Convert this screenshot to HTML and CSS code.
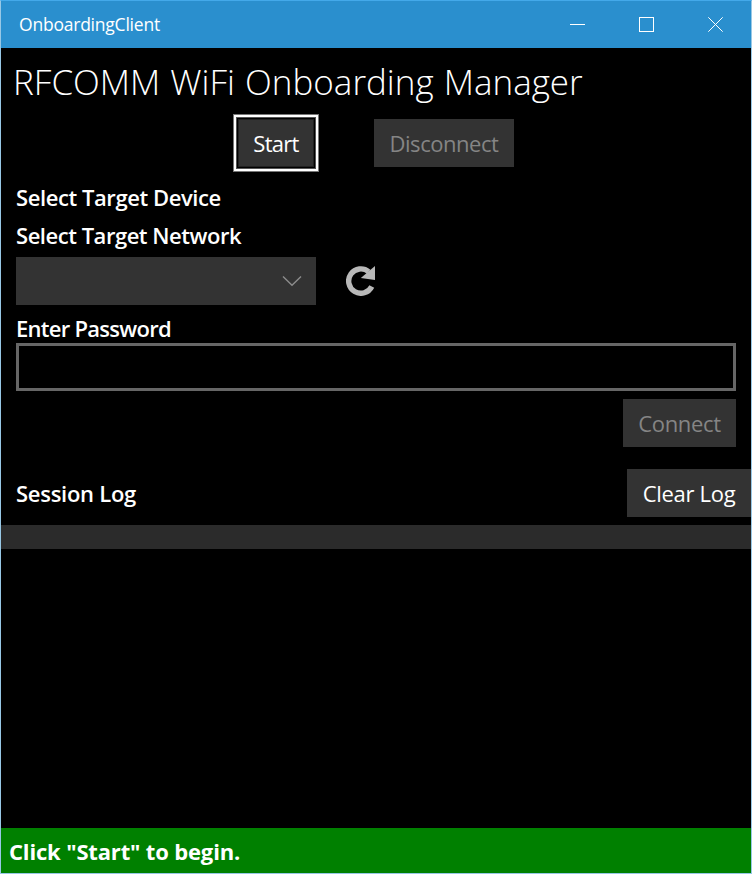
FILE: index.html
```html
<!DOCTYPE html>
<html lang="en">
<head>
<meta charset="utf-8">
<title>OnboardingClient</title>
<link rel="stylesheet" href="styles.css">
</head>
<body>
<div class="window">
  <header class="titlebar">
    <span class="app-name">OnboardingClient</span>
    <div class="caption-buttons">
      <svg viewBox="0 0 15 15"><path d="M0 7.5h15"/></svg>
      <svg viewBox="0 0 15 15"><path d="M.5.5h14v14H.5z"/></svg>
      <svg class="close" viewBox="0 0 15 15"><path d="M.3.3l14.4 14.4M14.7.3L.3 14.7"/></svg>
    </div>
  </header>
  <main>
    <h1>RFCOMM WiFi Onboarding Manager</h1>
    <div class="actions">
      <button class="btn start">Start</button>
      <button class="btn disconnect" disabled>Disconnect</button>
    </div>
    <h2 class="device">Select Target Device</h2>
    <h2 class="network">Select Target Network</h2>
    <div class="network-row">
      <div class="combo"><svg viewBox="0 0 20 12"><path d="M1 1.5l9 8.7 9-8.7"/></svg></div>
      <svg class="refresh" viewBox="0 0 30 30"><path class="arc" d="M25.8 20.5A12.2 12.2 0 1 1 22.7 5.7"/><path class="head" d="M29 0v14L14.8 12z"/></svg>
    </div>
    <h2 class="password-label">Enter Password</h2>
    <input class="password" type="password" aria-label="Password">
    <div class="connect-row"><button class="btn connect" disabled>Connect</button></div>
    <div class="log-head">
      <h2 class="log-title">Session Log</h2>
      <button class="btn clear">Clear Log</button>
    </div>
    <div class="log"></div>
  </main>
  <footer class="status">Click "Start" to begin.</footer>
</div>
</body>
</html>
```

FILE: styles.css
```css
* { box-sizing: border-box; }
body { margin: 0; background: #000; font-family: "Open Sans", "Noto Sans", sans-serif; color: #fff; }
.window { width: 752px; height: 874px; display: flex; flex-direction: column; border: 1px solid #98c8e6; border-top-color: #43a9ea; overflow: hidden; white-space: nowrap; }
.titlebar { height: 47px; flex: none; background: #2a8fce; display: flex; justify-content: space-between; align-items: center; padding: 0 28px 0 18px; }
.app-name { font-size: 17.5px; line-height: 24px; letter-spacing: -0.22px; margin-top: -1px; }
.caption-buttons { display: flex; gap: 54px; }
.caption-buttons svg { width: 15px; height: 15px; fill: none; stroke: #fff; stroke-width: 1; shape-rendering: crispEdges; }
.caption-buttons .close { shape-rendering: auto; }
main { flex: 1; display: flex; flex-direction: column; }
h1, h2 { margin: 0; }
h1 { height: 66px; padding-left: 12px; font-size: 35px; font-weight: 330; line-height: 68px; letter-spacing: 0; word-spacing: 1px; }
.actions { display: flex; height: 58px; align-items: center; padding-left: 232px; }
.btn { height: 48px; padding: 0; border: 0; background: #333; color: #fff; font: 22px/48px "Open Sans", "Noto Sans", sans-serif; letter-spacing: -0.3px; text-align: center; }
.btn:disabled { color: #858585; }
.start { width: 86px; height: 58px; border: 1px solid #777; background: #333; letter-spacing: -0.7px; box-shadow: inset 0 0 0 2px #fff, inset 0 0 0 3px #555, inset 0 0 0 4px #000, inset 0 0 0 5px #202020; }
.disconnect { width: 140px; margin-left: 55px; letter-spacing: -0.45px; }
h2 { font-size: 22px; font-weight: 600; line-height: 30px; padding-left: 15px; letter-spacing: -0.42px; }
.device { margin-top: 10px; }
.network { margin-top: 8px; letter-spacing: -0.47px; }
.network-row { display: flex; margin: 7px 0 0 15px; height: 48px; align-items: center; }
.combo { width: 300px; height: 48px; background: #333; display: flex; align-items: center; justify-content: flex-end; padding-right: 14px; }
.combo svg { width: 20px; height: 12px; fill: none; stroke: #8c8c8c; stroke-width: 1.4; }
.refresh { width: 30px; height: 30px; margin-left: 30px; }
.arc { fill: none; stroke: #b8b8b8; stroke-width: 5.4; }
.head { fill: #b8b8b8; }
.password-label { margin-top: 8px; letter-spacing: -0.72px; }
.password { width: 720px; height: 48px; margin-left: 15px; background: #000; border: 3px solid #666; border-radius: 0; color: #fff; outline: 0; }
.connect-row { display: flex; justify-content: flex-end; margin: 8px 15px 0 0; }
.connect { width: 113px; }
.log-head { display: flex; justify-content: space-between; align-items: center; margin-top: 22px; }
.log-title { letter-spacing: -0.28px; }
.clear { width: 124px; }
.log { height: 24px; margin-top: 8px; background: #2b2b2b; }
.status { height: 45px; flex: none; background: #008000; padding-left: 8px; font-size: 22px; font-weight: 700; line-height: 47px; letter-spacing: -0.16px; }
```
